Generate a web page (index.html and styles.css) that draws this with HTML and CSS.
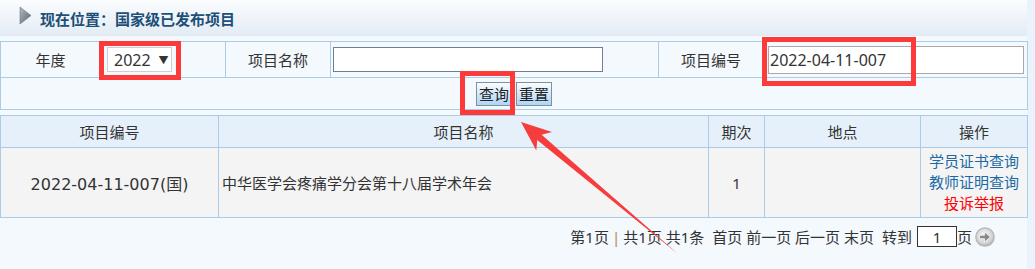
FILE: index.html
```html
<!DOCTYPE html>
<html>
<head>
    <meta charset="utf-8">
    <title>国家级已发布项目</title>
    <link rel="stylesheet" href="styles.css">
</head>
<body>
<div class="page">
    <!-- 当前位置 -->
    <div class="crumb">
        <svg class="crumb-icon" width="13" height="19" viewBox="0 0 13 19">
            <defs>
                <linearGradient id="tri" x1="0" y1="0" x2="1" y2="1">
                    <stop offset="0" stop-color="#b3bcc4"/>
                    <stop offset="1" stop-color="#56626d"/>
                </linearGradient>
            </defs>
            <polygon points="1,1 12,9.5 1,18" fill="url(#tri)" stroke="#6f7b85" stroke-width="0.6" stroke-linejoin="round"/>
        </svg>
        现在位置：国家级已发布项目
    </div>

    <!-- 查询条件 -->
    <table class="search">
        <colgroup>
            <col style="width:100px"><col style="width:125px"><col style="width:105px">
            <col style="width:328px"><col style="width:105px"><col style="width:264px">
        </colgroup>
        <tr class="cond">
            <td class="lbl">年度</td>
            <td><span class="select"><b>2022</b><i>▼</i></span></td>
            <td class="lbl">项目名称</td>
            <td><input type="text" class="txt-name"></td>
            <td class="lbl">项目编号</td>
            <td><input type="text" class="txt-no" value="2022-04-11-007"></td>
        </tr>
        <tr class="ops">
            <td colspan="6">
                <button type="button" class="btn">查询</button><button type="button" class="btn">重置</button>
            </td>
        </tr>
    </table>

    <!-- 项目列表 -->
    <table class="list">
        <colgroup>
            <col style="width:218px"><col style="width:490px"><col style="width:56px">
            <col style="width:156px"><col style="width:107px">
        </colgroup>
        <tr class="head">
            <th>项目编号</th>
            <th>项目名称</th>
            <th>期次</th>
            <th>地点</th>
            <th>操作</th>
        </tr>
        <tr class="row">
            <td class="center code">2022-04-11-007(国)</td>
            <td class="name">中华医学会疼痛学分会第十八届学术年会</td>
            <td class="center">1</td>
            <td></td>
            <td class="center links">
                <a href="#">学员证书查询</a>
                <a href="#">教师证明查询</a>
                <a href="#" class="warn">投诉举报</a>
            </td>
        </tr>
    </table>

    <!-- 分页 -->
    <div class="pager">
        <span>第1页</span><span class="sep">|</span><span>共1页 共1条</span>
        <span class="gap">首页 前一页 后一页 末页</span>
        <span class="gap">转到</span><input type="text" class="go" value="1"><span>页</span>
        <svg class="go-icon" width="20" height="20" viewBox="0 0 20 20">
            <defs>
                <radialGradient id="gobg" cx="0.45" cy="0.4" r="0.6">
                    <stop offset="0" stop-color="#f7f7f7"/>
                    <stop offset="0.75" stop-color="#d2d2d2"/>
                    <stop offset="1" stop-color="#b0b0b0"/>
                </radialGradient>
            </defs>
            <circle cx="10" cy="10" r="9.2" fill="url(#gobg)" stroke="#b5b5b5" stroke-width="1.2"/>
            <path d="M4.6 8.2h5V4.8l5.8 5.2-5.8 5.2v-3.4h-5z" fill="#8a8a8a" stroke="#f4f4f4" stroke-width="0.9" stroke-linejoin="round"/>
        </svg>
    </div>

    <!-- 截图上的标注 -->
    <div class="mark mark-year"></div>
    <div class="mark mark-no"></div>
    <div class="mark mark-query"></div>
    <svg class="arrow" width="1035" height="269" viewBox="0 0 1035 269">
        <polygon points="521,122 552,132 541.6,134.7 678,254 537.2,140.1 536.3,150.4" fill="#f63c3c"/>
    </svg>
</div>
</body>
</html>
```

FILE: styles.css
```css
body {
    margin: 0;
    background-color: #eaf3fc;
    font-family: "Noto Sans", "Noto Sans CJK SC", sans-serif;
    font-size: 15px;
    color: #333;
}
.page {
    position: relative;
    width: 1027px;
    height: 269px;
    background-color: #f4f9fe;
}
.crumb {
    display: flex;
    align-items: center;
    height: 36px;
    padding-left: 19px;
    box-sizing: border-box;
    background: linear-gradient(#fbfdfe, #e2ebf4);
    font-weight: bold;
    font-size: 15px;
    color: #1d4f78;
}
.crumb-icon {
    margin-right: 8px;
    margin-top: -5px;
}
table {
    border-collapse: collapse;
    table-layout: fixed;
    width: 1027px;
}
td, th {
    border: 1px solid #a9cde8;
    padding: 0;
}
.search {
    margin-top: 5px;
}
.cond td {
    height: 35px;
}
.lbl {
    text-align: center;
}
.select {
    display: inline-flex;
    align-items: center;
    width: 65px;
    height: 25px;
    margin-left: 6px;
    padding-left: 6px;
    box-sizing: border-box;
    background-color: #fff;
    border: 1px solid #cfcfcf;
    font-size: 16px;
    vertical-align: middle;
}
.select b {
    font-weight: normal;
}
.select i {
    margin-left: 8px;
    font-style: normal;
    font-size: 10px;
}
input {
    font-family: inherit;
    box-sizing: border-box;
}
.txt-name {
    width: 270px;
    height: 25px;
    margin-left: 2px;
    border: 1px solid #6d7f92;
    background-color: #fff;
}
.txt-no {
    width: 256px;
    height: 28px;
    margin-left: 4px;
    padding: 0 1px;
    border: 1px solid #a8a8a8;
    background-color: #fff;
    font-size: 16px;
    color: #333;
}
.ops td {
    height: 31px;
    text-align: center;
}
.btn {
    height: 24px;
    margin: 0 2px;
    padding: 0 2px;
    border: 1px solid #7f909f;
    background: linear-gradient(#fafdff, #acd6f6);
    font-family: inherit;
    font-size: 15px;
    color: #222;
}
.list {
    margin-top: 5px;
}
.head th {
    height: 31px;
    background-color: #e6f0fa;
    font-weight: normal;
}
.row td {
    height: 69px;
    background-color: #f4f4f4;
}
.center {
    text-align: center;
}
.row .code {
    font-family: "DejaVu Sans", "Noto Sans CJK SC", sans-serif;
    font-size: 16px;
}
.row .name {
    padding-left: 3px;
}
.links a {
    display: block;
    line-height: 21px;
    color: #1b6aa6;
    text-decoration: none;
}
.links a.warn {
    color: #ff0000;
}
.pager {
    display: flex;
    justify-content: flex-end;
    align-items: center;
    margin-top: 8px;
    padding-right: 32px;
}
.pager .sep {
    margin: 0 3px;
    color: #b9834a;
}
.pager .gap {
    margin-left: 8px;
}
.go {
    width: 40px;
    height: 21px;
    margin-left: 5px;
    border: 1px solid #333;
    background-color: #fff;
    text-align: center;
    font-size: 15px;
    color: #333;
}
.go-icon {
    margin-left: 3px;
}
.mark {
    position: absolute;
    border: 5px solid #fd3a3a;
    box-sizing: border-box;
}
.mark-year {
    left: 99px;
    top: 41px;
    width: 82px;
    height: 39px;
}
.mark-no {
    left: 762px;
    top: 37px;
    width: 154px;
    height: 49px;
}
.mark-query {
    left: 460px;
    top: 71px;
    width: 55px;
    height: 44px;
}
.arrow {
    position: absolute;
    left: 0;
    top: 0;
}
```
